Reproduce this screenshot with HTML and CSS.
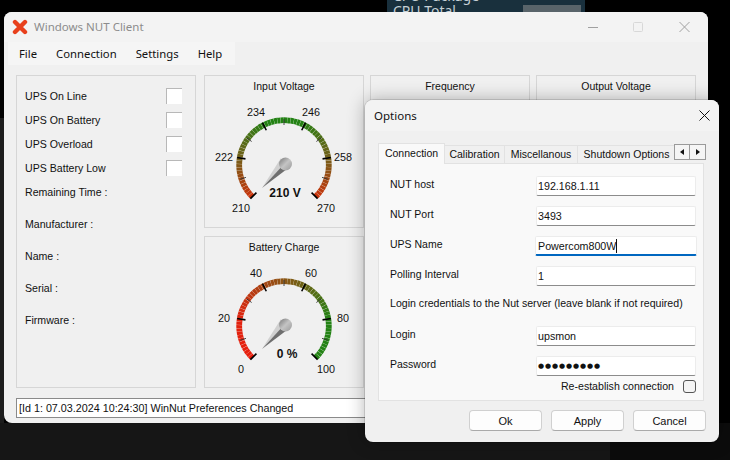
FILE: index.html
```html
<!DOCTYPE html>
<html lang="en">
<head>
    <meta charset="UTF-8">
    <meta name="viewport" content="width=device-width, initial-scale=1.0">
    <title>Windows NUT Client</title>
    <link rel="stylesheet" href="styles.css">
</head>
<body>
    <div id="desktop">
        <div class="side-strip"></div>
        <div class="floor-strip"></div>

        <!-- sensor widget behind the windows -->
        <div class="widget">
            <div class="widget-row">CPU Package</div>
            <div class="widget-row">CPU Total<span class="widget-bar"></span></div>
        </div>

        <!-- main window -->
        <div class="window main-window">
            <div class="titlebar">
                <svg class="app-icon" width="16" height="16" viewBox="0 0 16 16">
                    <path d="M3 3L13 13M13 3L3 13" stroke="#e8401c" stroke-width="4.4" stroke-linecap="round"/>
                </svg>
                <span class="app-title">Windows NUT Client</span>
                <div class="controls">
                    <svg width="45" height="12" viewBox="0 0 45 12"><path d="M0 6.5H10" stroke="#a0a0a0"/></svg>
                    <svg width="46" height="12" viewBox="0 0 46 12"><rect x="0.5" y="1.5" width="9" height="9" rx="1" fill="none" stroke="#d8d8d8"/></svg>
                    <svg width="11" height="12" viewBox="0 0 11 12"><path d="M0.5 1L10.5 11M10.5 1L0.5 11" stroke="#a0a0a0"/></svg>
                </div>
            </div>
            <div class="menubar">
                <span class="menu-item">File</span>
                <span class="menu-item">Connection</span>
                <span class="menu-item">Settings</span>
                <span class="menu-item">Help</span>
            </div>
            <div class="content">
                <div class="panel side">
                    <div class="status-row">UPS On Line<span class="check"></span></div>
                    <div class="status-row">UPS On Battery<span class="check"></span></div>
                    <div class="status-row">UPS Overload<span class="check"></span></div>
                    <div class="status-row">UPS Battery Low<span class="check"></span></div>
                    <div class="status-row">Remaining Time :</div>
                    <div class="status-row spaced">Manufacturer :</div>
                    <div class="status-row spaced">Name :</div>
                    <div class="status-row spaced">Serial :</div>
                    <div class="status-row spaced">Firmware :</div>
                </div>
                <div class="panel gauge">
                    <div class="gauge-title">Input Voltage</div>
                    <svg class="dial" data-kind="voltage" data-value="210 V" data-labels="210,222,234,246,258,270" width="158" height="130"></svg>
                </div>
                <div class="panel gauge">
                    <div class="gauge-title">Frequency</div>
                </div>
                <div class="panel gauge">
                    <div class="gauge-title">Output Voltage</div>
                </div>
                <div class="panel gauge">
                    <div class="gauge-title">Battery Charge</div>
                    <svg class="dial" data-kind="charge" data-value="0 %" data-labels="0,20,40,60,80,100" width="158" height="129"></svg>
                </div>
            </div>
            <div class="log">[Id 1: 07.03.2024 10:24:30] WinNut Preferences Changed</div>
        </div>

        <!-- options dialog -->
        <div class="window dialog">
            <div class="dialog-title">
                <span>Options</span>
                <svg width="11" height="11" viewBox="0 0 11 11"><path d="M0.5 0.5L10.5 10.5M10.5 0.5L0.5 10.5" stroke="#111"/></svg>
            </div>
            <div class="tabs">
                <span class="tab active">Connection</span>
                <span class="tab tab-cal">Calibration</span>
                <span class="tab tab-misc">Miscellanous</span>
                <span class="tab tab-shut">Shutdown Options</span>
                <span class="scroller">
                    <span class="scroll-btn"><i class="arrow left"></i></span>
                    <span class="scroll-btn"><i class="arrow right"></i></span>
                </span>
            </div>
            <div class="tab-page">
                <div class="form-row"><label>NUT host</label><div class="field">192.168.1.11</div></div>
                <div class="form-row"><label>NUT Port</label><div class="field">3493</div></div>
                <div class="form-row"><label>UPS Name</label><div class="field focus">Powercom800W<span class="caret"></span></div></div>
                <div class="form-row"><label>Polling Interval</label><div class="field">1</div></div>
                <div class="note">Login credentials to the Nut server (leave blank if not required)</div>
                <div class="form-row"><label>Login</label><div class="field">upsmon</div></div>
                <div class="form-row"><label>Password</label><div class="field dots">●●●●●●●●●</div></div>
                <div class="reconnect">Re-establish connection<span class="round-check"></span></div>
            </div>
            <div class="buttons">
                <button>Ok</button>
                <button>Apply</button>
                <button>Cancel</button>
            </div>
        </div>
    </div>
    <script src="gauge.js"></script>
</body>
</html>
```

FILE: styles.css
```css
html, body {
    margin: 0;
    padding: 0;
    background-color: #000;
}
#desktop {
    position: relative;
    width: 730px;
    height: 460px;
    overflow: hidden;
    background-color: #000;
    font-family: "Liberation Sans", Arial, sans-serif;
    font-size: 10.5px;
    color: #111;
}
.side-strip {
    position: absolute;
    left: 0;
    top: 118px;
    width: 4px;
    height: 320px;
    background-color: #1c1c1c;
}
.floor-strip {
    position: absolute;
    left: 0;
    top: 423px;
    width: 730px;
    height: 37px;
    background: linear-gradient(to right, #161616 610px, #0c0c0c 610px);
}
.widget {
    position: absolute;
    left: 387px;
    top: 0;
    width: 198px;
    height: 14px;
    overflow: hidden;
    background-color: #19303d;
    color: #c6d0d6;
    font-family: "Noto Sans", sans-serif;
    font-size: 14px;
}
.widget-row {
    position: relative;
    height: 15px;
    line-height: 15px;
    padding-left: 6px;
    margin-top: -12px;
}
.widget-row + .widget-row {
    margin-top: 0;
}
.widget-bar {
    position: absolute;
    left: 136px;
    top: 2px;
    width: 58px;
    height: 13px;
    background-color: #59646a;
}

.window {
    position: absolute;
    border-radius: 8px;
    background-color: #f0f0f0;
}
.main-window {
    left: 4px;
    top: 12px;
    width: 704px;
    height: 411px;
}
.titlebar {
    display: flex;
    align-items: center;
    height: 30px;
    padding-left: 8px;
    padding-right: 18px;
    background-color: #f3f3f3;
    border-radius: 8px 8px 0 0;
}
.app-icon {
    margin-right: 6px;
}
.app-title {
    position: relative;
    top: -1px;
    font-family: "Noto Sans", sans-serif;
    font-size: 11.5px;
    color: #8c8c8c;
}
.controls {
    display: flex;
    align-items: center;
    margin-left: auto;
}
.menubar {
    display: flex;
    width: 227px;
    height: 23px;
    margin-left: 4px;
    padding-left: 4px;
    box-sizing: border-box;
    background-color: #f5f5f5;
    font-family: "Noto Sans", sans-serif;
    font-size: 11.3px;
    line-height: 23px;
}
.menu-item {
    padding-left: 7px;
    padding-right: 12px;
}
.content {
    display: grid;
    grid-template-columns: 182px 160px 160px 160px;
    grid-template-rows: 153px 152px;
    column-gap: 6px;
    row-gap: 8px;
    margin-top: 10px;
    margin-left: 12px;
}
.panel {
    box-sizing: border-box;
    border: 1px solid #d6d6d6;
}
.side {
    grid-row: span 2;
    width: 180px;
    padding: 8px 13px 0 8px;
}
.status-row {
    display: flex;
    align-items: center;
    justify-content: space-between;
    height: 24px;
    font-size: 10.6px;
}
.status-row.spaced {
    margin-top: 8px;
}
.check {
    box-sizing: border-box;
    width: 16px;
    height: 16px;
    background-color: #fff;
    border-top: 1px solid #b8b8b8;
    border-left: 1px solid #b8b8b8;
}
.gauge-title {
    height: 21px;
    line-height: 21px;
    text-align: center;
}
.dial {
    display: block;
}
.dial text {
    font-family: "Liberation Sans", Arial, sans-serif;
    font-size: 10.8px;
    fill: #111;
    text-anchor: middle;
}
.dial .reading {
    font-size: 12px;
    font-weight: bold;
}
.log {
    box-sizing: border-box;
    width: 680px;
    height: 20px;
    margin-top: 10px;
    margin-left: 12px;
    padding-left: 2px;
    line-height: 18px;
    background-color: #fff;
    border: 1px solid #8a8a8a;
    font-size: 10.75px;
}

.dialog {
    left: 365px;
    top: 100px;
    width: 354px;
    height: 342px;
    box-shadow: 0 0 18px rgba(0, 0, 0, 0.3), 0 0 0 1px rgba(0, 0, 0, 0.12);
}
.dialog-title {
    display: flex;
    align-items: center;
    justify-content: space-between;
    height: 31px;
    padding-left: 9px;
    padding-right: 9px;
    background-color: #f3f3f3;
    border-radius: 8px 8px 0 0;
    font-family: "Noto Sans", sans-serif;
    font-size: 11.5px;
}
.tabs {
    display: flex;
    align-items: flex-end;
    height: 32px;
    margin-left: 13px;
}
.tab {
    box-sizing: border-box;
    height: 18px;
    line-height: 17px;
    text-align: center;
    background-color: #f0f0f0;
    border: 1px solid #e2e2e2;
    border-bottom: none;
    border-left: none;
}
.tab.active {
    width: 67px;
    height: 21px;
    line-height: 19px;
    position: relative;
    top: 1px;
    background-color: #f9f9f9;
    border-left: 1px solid #e2e2e2;
}
.tab-cal { width: 60px; }
.tab-misc { width: 73px; }
.tab-shut {
    width: 96px;
    padding-left: 1px;
    border-right: none;
    overflow: hidden;
    white-space: nowrap;
}
.scroller {
    display: flex;
    margin-bottom: 3px;
}
.scroll-btn {
    display: flex;
    align-items: center;
    justify-content: center;
    box-sizing: border-box;
    width: 16px;
    height: 16px;
    background-color: #f5f5f5;
    border: 1px solid #9a9a9a;
}
.scroll-btn + .scroll-btn {
    border-left: none;
}
.arrow {
    width: 0;
    height: 0;
    border-top: 3px solid transparent;
    border-bottom: 3px solid transparent;
}
.arrow.left { border-right: 4px solid #111; }
.arrow.right { border-left: 4px solid #111; }
.tab-page {
    box-sizing: border-box;
    width: 326px;
    height: 238px;
    margin-left: 13px;
    padding: 12px 7px 0 11px;
    background-color: #f9f9f9;
    border: 1px solid #e2e2e2;
}
.form-row {
    display: flex;
    justify-content: space-between;
    height: 20px;
    margin-bottom: 10px;
}
.form-row label {
    line-height: 16px;
}
.field {
    box-sizing: border-box;
    width: 160px;
    height: 20px;
    padding-left: 1px;
    line-height: 19px;
    background-color: #fff;
    border: 1px solid #ececec;
    border-bottom: 1px solid #8c8c8c;
    border-radius: 2px;
    font-size: 10.7px;
}
.field.focus {
    width: 162px;
    margin-right: -1px;
    padding-left: 2px;
    border-bottom: 2px solid #0067c0;
}
.field.dots {
    font-family: "DejaVu Sans", sans-serif;
    font-size: 7px;
    letter-spacing: 0.9px;
}
.caret {
    display: inline-block;
    width: 1px;
    height: 14px;
    vertical-align: -3px;
    background-color: #111;
}
.note {
    height: 14px;
    line-height: 14px;
    margin-bottom: 16px;
    font-size: 10.6px;
}
.reconnect {
    display: flex;
    align-items: center;
    justify-content: flex-end;
    height: 14px;
    margin-top: -7px;
    font-size: 10.6px;
}
.round-check {
    box-sizing: border-box;
    width: 13px;
    height: 13px;
    margin-left: 9px;
    background-color: #f4f4f4;
    border: 1px solid #555;
    border-radius: 3px;
}
.buttons {
    display: flex;
    justify-content: flex-end;
    column-gap: 9px;
    margin-top: 9px;
    margin-right: 13px;
}
.buttons button {
    width: 73px;
    height: 21px;
    padding: 0;
    background-color: #fdfdfd;
    border: 1px solid #d0d0d0;
    border-bottom-color: #aaa;
    border-radius: 4px;
    font-family: "Liberation Sans", Arial, sans-serif;
    font-size: 11px;
    color: #111;
}
```

FILE: gauge.js
```js
// draws the two round dials
const NS = "http://www.w3.org/2000/svg";
const CX = 79;
const CY = 68;
const STEPS = 64;

const colors = {
    voltage: [[0, [205, 50, 10]], [0.2, [115, 95, 25]], [0.42, [35, 130, 20]], [0.58, [35, 130, 20]], [0.8, [115, 95, 25]], [1, [205, 50, 10]]],
    charge: [[0, [232, 30, 12]], [0.2, [225, 35, 15]], [0.5, [140, 85, 20]], [0.8, [35, 130, 20]], [1, [35, 130, 20]]]
};
const labelPlaces = [[36, 115], [19, 63.5], [51, 19], [106, 19], [138, 63.5], [121, 115]];

function add(svg, name, attrs, text) {
    const el = document.createElementNS(NS, name);
    for (const key in attrs) {
        el.setAttribute(key, attrs[key]);
    }
    if (text !== undefined) {
        el.textContent = text;
    }
    svg.appendChild(el);
    return el;
}

function colorAt(stops, t) {
    for (let i = 1; i < stops.length; i++) {
        if (t <= stops[i][0]) {
            const k = (t - stops[i - 1][0]) / (stops[i][0] - stops[i - 1][0]);
            const a = stops[i - 1][1];
            const b = stops[i][1];
            return `rgb(${a.map((v, n) => Math.round(v + (b[n] - v) * k)).join(",")})`;
        }
    }
    return "#000";
}

// angle in degrees, 0 is straight up
function point(deg, r) {
    const a = deg * Math.PI / 180;
    return [CX + Math.sin(a) * r, CY - Math.cos(a) * r];
}

function line(svg, deg, r1, r2, color, width) {
    const p = point(deg, r1);
    const q = point(deg, r2);
    add(svg, "line", { x1: p[0], y1: p[1], x2: q[0], y2: q[1], stroke: color, "stroke-width": width });
}

function needle(svg, id) {
    const defs = add(svg, "defs", {});
    const grad = add(defs, "linearGradient", { id: id, x1: 0, y1: 0, x2: 1, y2: 1 });
    add(grad, "stop", { offset: 0, "stop-color": "#777" });
    add(grad, "stop", { offset: 0.5, "stop-color": "#c4c4c4" });
    add(grad, "stop", { offset: 1, "stop-color": "#999" });
    add(svg, "polygon", { points: `${CX - 22},${CY + 23} ${CX - 3},${CY - 7} ${CX},${CY - 1}`, fill: "#d0d0d0" });
    add(svg, "polygon", { points: `${CX - 22},${CY + 23} ${CX},${CY - 1} ${CX + 3},${CY + 4}`, fill: "#6e6e6e" });
    add(svg, "circle", { cx: CX + 1.5, cy: CY - 1, r: 6.5, fill: `url(#${id})` });
}

document.querySelectorAll(".dial").forEach((svg) => {
    const kind = svg.dataset.kind;
    const labels = svg.dataset.labels.split(",");

    for (let i = 0; i < STEPS; i++) {
        const a1 = -135 + 270 * i / STEPS;
        const a2 = -135 + 270 * (i + 1) / STEPS - 0.25;
        const p = point(a1, 44.8);
        const q = point(a2, 44.8);
        add(svg, "path", {
            d: `M${p[0]} ${p[1]}A44.8 44.8 0 0 1 ${q[0]} ${q[1]}`,
            fill: "none",
            stroke: colorAt(colors[kind], (i + 0.5) / STEPS),
            "stroke-width": 5.8
        });
    }

    for (let i = 0; i <= 10; i++) {
        const deg = -135 + 27 * i;
        if (i % 2 === 0) {
            line(svg, deg, 39, 47.5, "#000", 1.6);
        } else {
            line(svg, deg, 40, 46, "#333", 0.9);
        }
    }

    labels.forEach((text, i) => {
        add(svg, "text", { x: labelPlaces[i][0], y: labelPlaces[i][1] }, text);
    });
    needle(svg, "hub-" + kind);
    add(svg, "text", { class: "reading", x: kind === "charge" ? 82 : 80, y: 99.5 }, svg.dataset.value);
});
```
